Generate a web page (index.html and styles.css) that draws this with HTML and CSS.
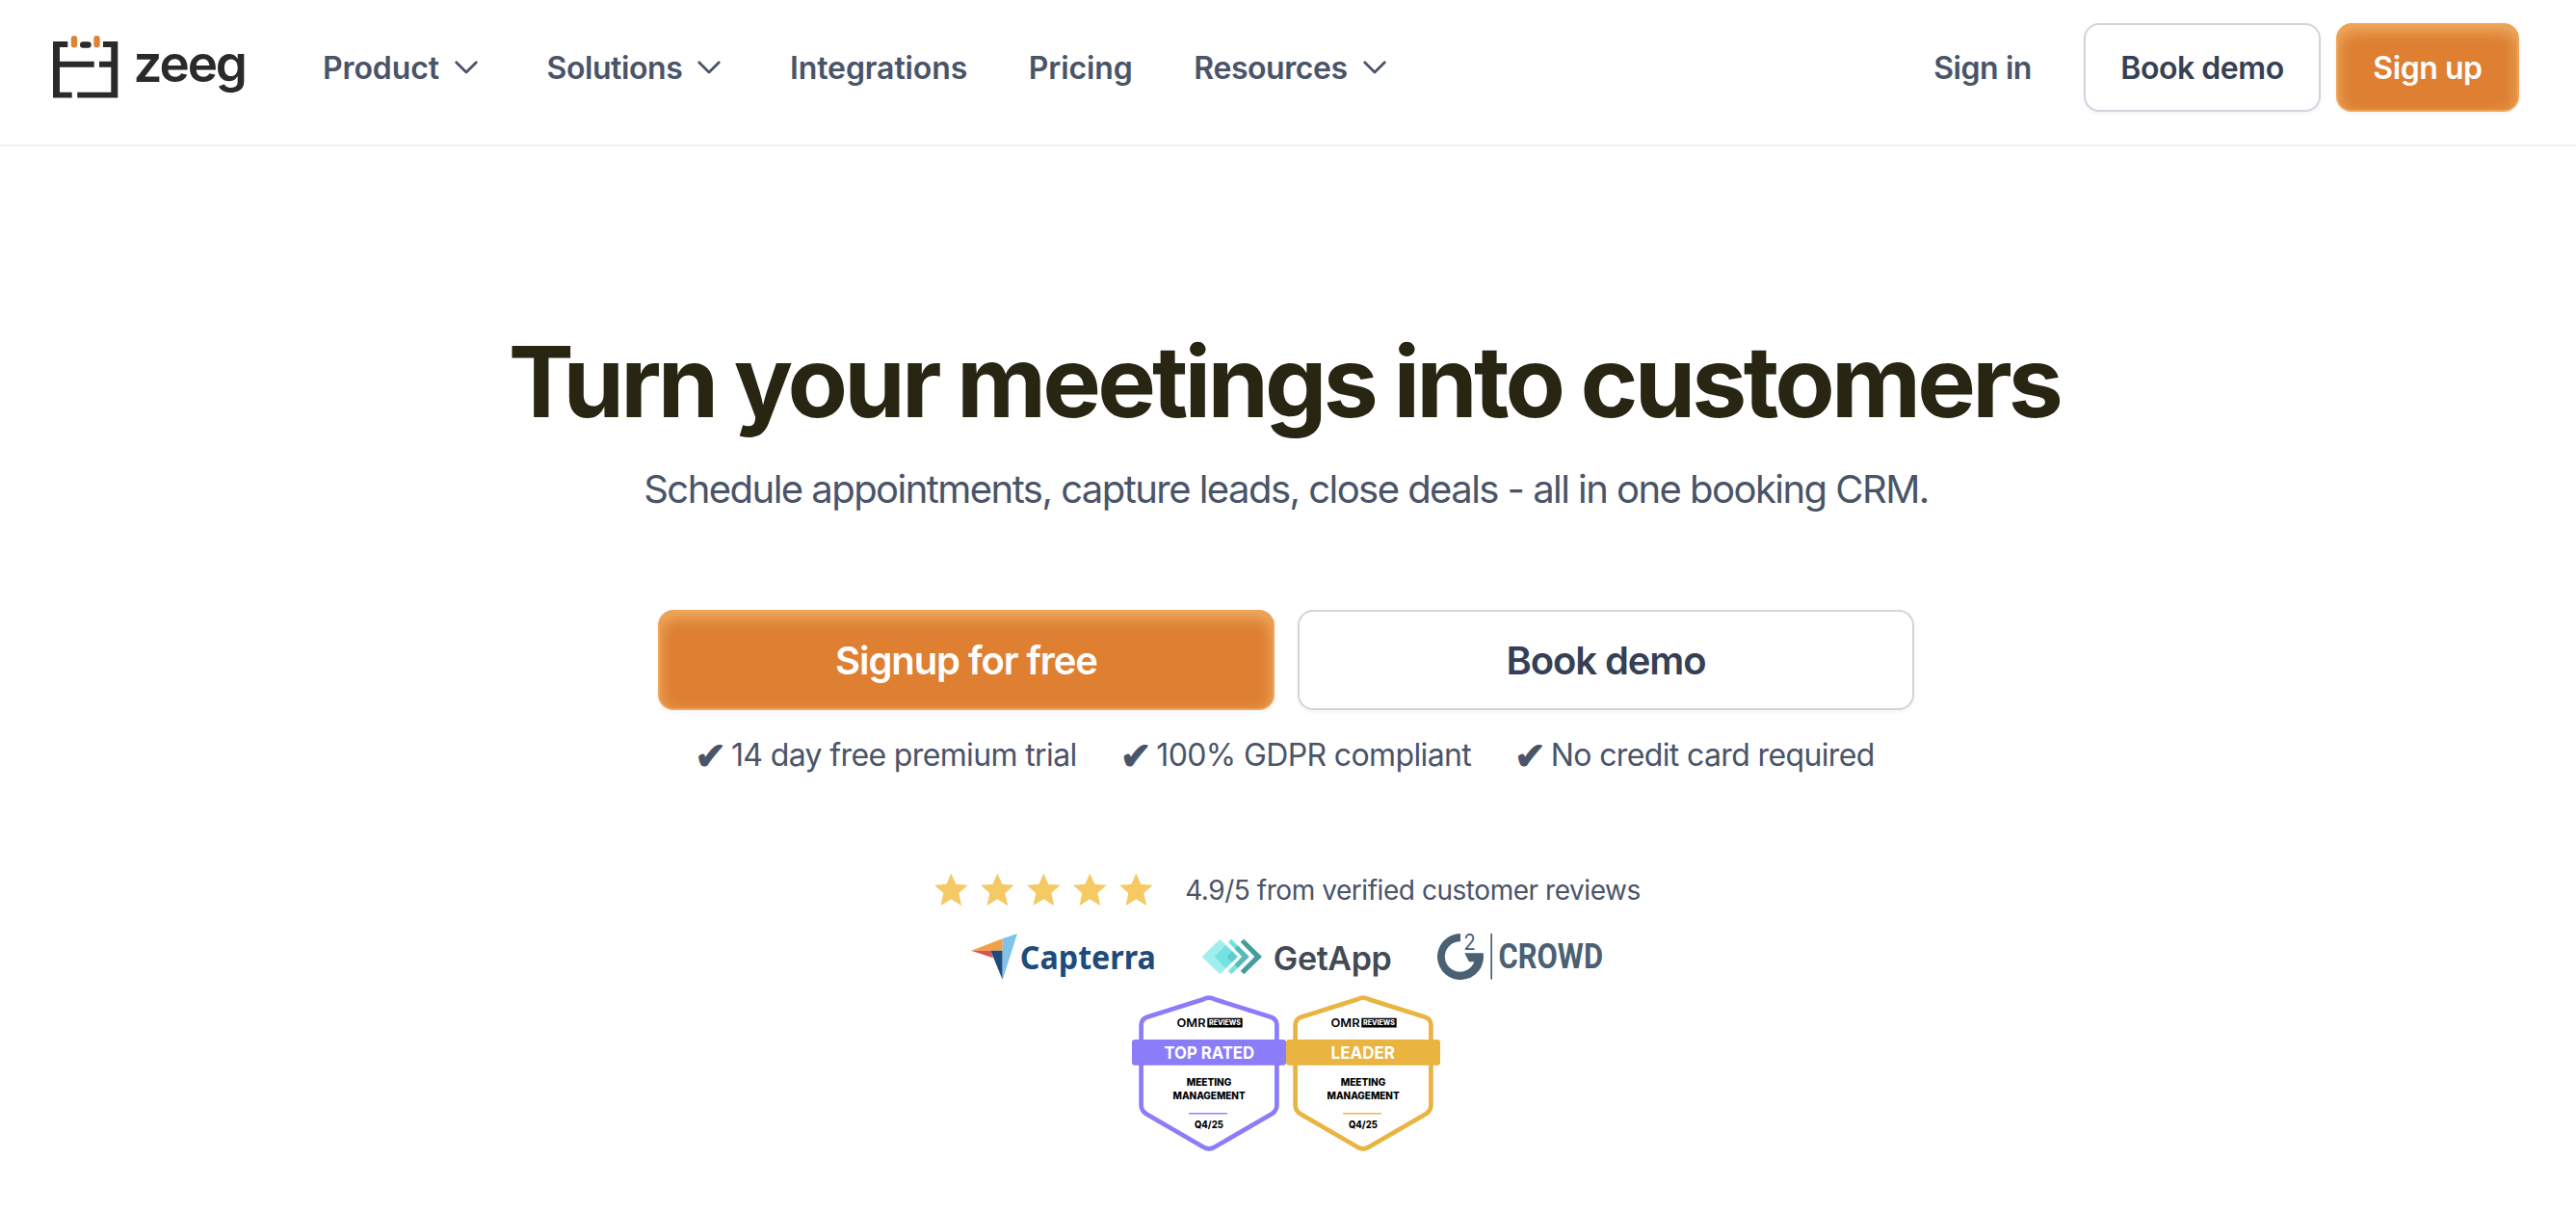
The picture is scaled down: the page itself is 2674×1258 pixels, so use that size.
FILE: index.html
```html
<!DOCTYPE html>
<html lang="en">
<head>
<meta charset="utf-8">
<title>Zeeg – Turn your meetings into customers</title>
<link rel="stylesheet" href="styles.css">
</head>
<body>
<svg class="defs" width="0" height="0" aria-hidden="true">
  <symbol id="chevron" viewBox="0 0 40 40"><path d="M9.7 14.8 20 25.1 30.3 14.8" fill="none" stroke="currentColor" stroke-width="2.8" stroke-linecap="round" stroke-linejoin="round"/></symbol>
  <symbol id="star" viewBox="0 0 35 36"><path fill="#f5c963" d="M17.3.5 22.3 11.7 34.6 12.7 25.3 21 28.2 34 17.3 27.3 6.5 34 9.3 21 0 12.7 12.4 11.7Z"/></symbol>
</svg>

<header class="header">
  <a class="logo" aria-label="zeeg">
    <svg width="200" height="92" viewBox="0 0 200 92">
      <g fill="#2a2a2a">
        <path d="M0 19H15.3V25H7V39.7H42.7V45.7H7V71.7H19.7V77.6H0Z"/>
        <path d="M52 19H67.3V77.6H25.3V71.7H60.3V45.7H48V39.7H60.3V25H52Z"/>
        <rect x="28" y="19.2" width="11.7" height="6.5" rx="3.2"/>
      </g>
      <g fill="#e08433">
        <rect x="18.8" y="13" width="6.4" height="12.5" rx="3.2"/>
        <rect x="42.3" y="13" width="6.4" height="12.5" rx="3.2"/>
      </g>
      <text class="logo-word" x="83.5" y="60.5" textLength="118.5" lengthAdjust="spacing">zeeg</text>
    </svg>
  </a>
  <nav class="nav">
    <a class="nav-item">Product<svg class="chevron"><use href="#chevron"/></svg></a>
    <a class="nav-item nav-item-tight">Solutions<svg class="chevron"><use href="#chevron"/></svg></a>
    <a class="nav-item">Integrations</a>
    <a class="nav-item">Pricing</a>
    <a class="nav-item nav-item-tight">Resources<svg class="chevron"><use href="#chevron"/></svg></a>
  </nav>
  <div class="actions">
    <a class="signin">Sign in</a>
    <a class="btn btn-outline btn-demo">Book demo</a>
    <a class="btn btn-primary btn-signup">Sign up</a>
  </div>
</header>

<main class="hero">
  <h1 class="title">Turn your meetings into customers</h1>
  <p class="subtitle">Schedule appointments, capture leads, close deals - all in one booking CRM.</p>
  <div class="cta">
    <a class="btn btn-large btn-primary">Signup for free</a>
    <a class="btn btn-large btn-outline">Book demo</a>
  </div>
  <ul class="perks">
    <li><span class="tick">✔</span>14 day free premium trial</li>
    <li><span class="tick">✔</span>100% GDPR compliant</li>
    <li><span class="tick">✔</span>No credit card required</li>
  </ul>

  <div class="rating">
    <div class="stars">
      <svg class="star"><use href="#star"/></svg>
      <svg class="star"><use href="#star"/></svg>
      <svg class="star"><use href="#star"/></svg>
      <svg class="star"><use href="#star"/></svg>
      <svg class="star"><use href="#star"/></svg>
    </div>
    <span class="rating-text">4.9/5 from verified customer reviews</span>
  </div>

  <div class="sources">
    <svg width="192" height="48" viewBox="0 0 192 48">
      <path fill="#f2a146" d="M0 17.7 32.7 5.3V17.7Z"/>
      <path fill="#d9534f" d="M0 17.7H20.3L23 25.3Z"/>
      <path fill="#1f4b7b" d="M20.3 17.7H32.7V48Z"/>
      <path fill="#80c3e9" d="M32.7 5.3 48 0 32.7 48Z"/>
      <text class="word-capterra" x="50.8" y="37.4" textLength="141" lengthAdjust="spacingAndGlyphs">Capterra</text>
    </svg>
    <svg width="198" height="48" viewBox="0 0 198 48">
      <path fill="#a0efee" d="M.7 24 19.3 5.7 37.7 24 19.3 42.3Z"/>
      <path fill="#76e1e1" d="M13.7 24 25.5 12 37.7 24 25.5 36Z"/>
      <path fill="#62cbcb" d="M26.3 24 32 18.3 37.7 24 32 29.7Z"/>
      <path fill="#76e1e1" d="M28 8.7 31.3 5.7 49.7 24 31.3 42.3 28 38.7 42.3 24Z"/>
      <path fill="#59b9b9" d="M34.7 15.8 38 12.4 49.7 24 38 35.7 34.7 32 42.3 24Z"/>
      <path fill="#459c9c" d="M40.7 8.7 44.3 5.7 63 24 44.3 42.3 40.7 38.7 55.3 24Z"/>
      <text class="word-getapp" x="74.8" y="37.5" textLength="123" lengthAdjust="spacing">GetApp</text>
    </svg>
    <svg width="172" height="48" viewBox="0 0 172 48">
      <path fill="#4a6073" d="M24 0A24 24 0 1 0 47.7 20.3H28.3L33 29.3H38.3A15.7 15.7 0 1 1 24 8.3Z"/>
      <text class="word-two" x="27.3" y="17.2" textLength="12.6" lengthAdjust="spacingAndGlyphs">2</text>
      <path fill="#4a6073" d="M55.3 0H57V47.5H55.3Z"/>
      <text class="word-crowd" x="63.5" y="36" textLength="108.5" lengthAdjust="spacingAndGlyphs">CROWD</text>
    </svg>
  </div>

  <div class="badges">
    <svg class="badge badge-violet" viewBox="0 0 160 162">
      <path class="badge-frame" d="M74 4.3Q80 .9 86 4.3L144.5 22.8Q150.4 25 150.4 31V114Q150.4 120 145 123.3L86 157.5Q80 161.2 74 157.5L15 123.3Q9.6 120 9.6 114V31Q9.6 25 15.5 22.8Z"/>
      <text class="b-omr" x="46.5" y="33" textLength="30" lengthAdjust="spacingAndGlyphs">OMR</text>
      <rect x="78.3" y="23.7" width="36.4" height="9.8" fill="#000"/>
      <text class="b-reviews" x="80" y="31.3" textLength="33" lengthAdjust="spacingAndGlyphs">REVIEWS</text>
      <rect class="badge-fill" y="46" width="160" height="26.7" rx="3"/>
      <text class="b-title" x="33.5" y="66" textLength="93.5" lengthAdjust="spacingAndGlyphs">TOP RATED</text>
      <text class="b-text" x="56.8" y="94.4" textLength="46.5" lengthAdjust="spacingAndGlyphs">MEETING</text>
      <text class="b-text" x="42.5" y="107.8" textLength="75.2" lengthAdjust="spacingAndGlyphs">MANAGEMENT</text>
      <rect class="badge-fill" x="59" y="122.1" width="40" height="1.4"/>
      <text class="b-text" x="65" y="138.4" textLength="29.8" lengthAdjust="spacingAndGlyphs">Q4/25</text>
    </svg>
    <svg class="badge badge-gold" viewBox="0 0 160 162">
      <path class="badge-frame" d="M74 4.3Q80 .9 86 4.3L144.5 22.8Q150.4 25 150.4 31V114Q150.4 120 145 123.3L86 157.5Q80 161.2 74 157.5L15 123.3Q9.6 120 9.6 114V31Q9.6 25 15.5 22.8Z"/>
      <text class="b-omr" x="46.5" y="33" textLength="30" lengthAdjust="spacingAndGlyphs">OMR</text>
      <rect x="78.3" y="23.7" width="36.4" height="9.8" fill="#000"/>
      <text class="b-reviews" x="80" y="31.3" textLength="33" lengthAdjust="spacingAndGlyphs">REVIEWS</text>
      <rect class="badge-fill" y="46" width="160" height="26.7" rx="3"/>
      <text class="b-title" x="46.5" y="66" textLength="66.5" lengthAdjust="spacingAndGlyphs">LEADER</text>
      <text class="b-text" x="56.8" y="94.4" textLength="46.5" lengthAdjust="spacingAndGlyphs">MEETING</text>
      <text class="b-text" x="42.5" y="107.8" textLength="75.2" lengthAdjust="spacingAndGlyphs">MANAGEMENT</text>
      <rect class="badge-fill" x="59" y="122.1" width="40" height="1.4"/>
      <text class="b-text" x="65" y="138.4" textLength="29.8" lengthAdjust="spacingAndGlyphs">Q4/25</text>
    </svg>
  </div>
</main>
</body>
</html>
```
FILE: styles.css
```css
* { box-sizing: border-box; }

body {
  margin: 0;
  background: #fff;
  color: #4a5468;
  font-family: Inter, "Liberation Sans", sans-serif;
}

svg { display: block; flex: none; overflow: visible; }
.defs { display: none; }

/* Header */
.header {
  display: flex;
  align-items: center;
  height: 152px;
  padding: 24px 59px 34px 55px;
  border-bottom: 2px solid #f1f2f8;
}

.logo-word { font-size: 53px; font-weight: 600; fill: #2a2a2a; }

.nav {
  display: flex;
  align-items: center;
  gap: 63.6px;
  margin-left: 80px;
}

.nav-item,
.signin {
  display: flex;
  align-items: center;
  gap: 8px;
  padding-top: 1px;
  font-size: 32px;
  line-height: 48px;
  font-weight: 640;
  letter-spacing: -0.1px;
  white-space: nowrap;
}

.nav-item-tight { letter-spacing: -0.42px; }
.chevron { width: 40px; height: 40px; margin-top: -1px; }

.actions {
  display: flex;
  align-items: center;
  gap: 16px;
  margin-left: auto;
}

.signin { margin-right: 38px; letter-spacing: -0.43px; }

.btn {
  display: flex;
  align-items: center;
  justify-content: center;
  height: 92px;
  border: 2px solid;
  border-radius: 16px;
  font-size: 32px;
  font-weight: 640;
  letter-spacing: -0.45px;
  white-space: nowrap;
}

.btn-demo { width: 246px; }
.btn-signup { width: 190px; }

.btn-outline {
  background: #fff;
  border-color: #d0d5dd;
  color: #364054;
  box-shadow: 0 2px 4px rgba(16, 24, 40, .05);
}

.btn-primary {
  background: #de7f32;
  border-color: #f0a456;
  color: #fff;
  box-shadow: inset 0 6px 16px rgba(244, 188, 116, .8), 0 2px 4px rgba(16, 24, 40, .05);
}

.btn-large {
  width: 640px;
  height: 104px;
  font-size: 40px;
  letter-spacing: -1.1px;
}

/* Hero */
.hero {
  display: flex;
  flex-direction: column;
  align-items: center;
  padding: 188px 4px 0 0;
}

.title {
  margin: 0;
  padding-right: 4px;
  font-size: 102px;
  line-height: 112px;
  font-weight: 650;
  letter-spacing: -3.82px;
  word-spacing: -1px;
  color: #292513;
}

.subtitle {
  margin: 28px 0 0;
  font-size: 40px;
  line-height: 56px;
  letter-spacing: -1.54px;
}

.cta {
  display: flex;
  gap: 24px;
  margin-top: 97px;
}

.perks {
  display: flex;
  gap: 45px;
  height: 48px;
  margin: 23px 0 0;
  padding: 0 3px 0 0;
  list-style: none;
  font-size: 32px;
  line-height: 48px;
  letter-spacing: -0.63px;
}

.tick {
  margin-right: 5px;
  font-family: "DejaVu Sans", sans-serif;
  font-size: 39px;
  line-height: 1;
  letter-spacing: 0;
  vertical-align: -3px;
  -webkit-text-stroke: 1.2px currentColor;
}

.rating {
  display: flex;
  align-items: center;
  gap: 33px;
  height: 36px;
  margin-top: 98px;
  padding-left: 3px;
}

.stars { display: flex; gap: 13px; }
.star { width: 35px; height: 36px; }

.rating-text {
  font-size: 28px;
  line-height: 36px;
  letter-spacing: -0.45px;
}

/* Review sites */
.sources {
  display: flex;
  gap: 47px;
  margin-top: 27px;
  padding-left: 2px;
}

.word-capterra { font: 700 34px "Noto Sans", sans-serif; fill: #1f4b7b; }
.word-getapp { font-size: 34px; font-weight: 640; fill: #434a54; }
.word-two { font-size: 23px; fill: #4a6073; }
.word-crowd { font: 700 36px Roboto, sans-serif; fill: #4a6073; }

/* Award badges */
.badges { display: flex; margin-top: 16px; }
.badge { width: 160px; height: 162px; }
.badge-violet { color: #8b7cf9; }
.badge-gold { color: #e9b440; }
.badge-fill { fill: currentColor; }
.badge-frame { fill: #fff; stroke: currentColor; stroke-width: 4.7; }
.b-omr { font-size: 12px; font-weight: 600; fill: #000; }
.b-reviews { font-size: 7.5px; font-weight: 800; fill: #fff; }
.b-title { font-size: 18px; font-weight: 700; fill: #fff; }
.b-text { font-size: 10px; font-weight: 800; fill: #000; }
```
